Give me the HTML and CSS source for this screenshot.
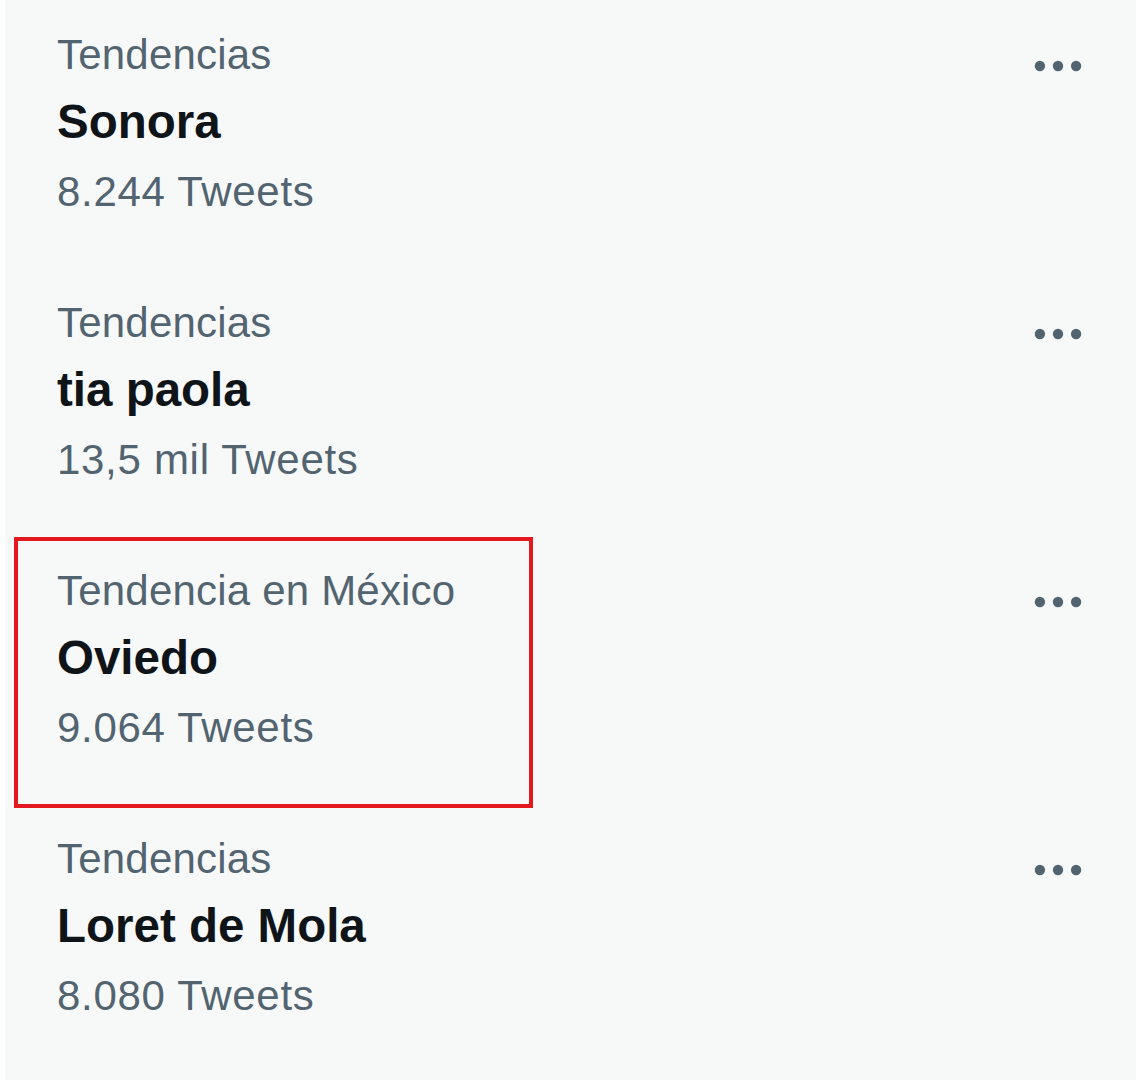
FILE: index.html
```html
<!DOCTYPE html>
<html lang="es">
<head>
<meta charset="utf-8">
<title>Tendencias</title>
<link rel="stylesheet" href="styles.css">
</head>
<body>
<div class="panel">
  <div class="trend">
    <div class="info">
      <div class="category">Tendencias</div>
      <div class="title">Sonora</div>
      <div class="count">8.244 Tweets</div>
    </div>
    <svg class="more" viewBox="0 0 24 24" aria-hidden="true"><circle cx="5" cy="12" r="2"/><circle cx="12" cy="12" r="2"/><circle cx="19" cy="12" r="2"/></svg>
  </div>
  <div class="trend">
    <div class="info">
      <div class="category">Tendencias</div>
      <div class="title">tia paola</div>
      <div class="count">13,5 mil Tweets</div>
    </div>
    <svg class="more" viewBox="0 0 24 24" aria-hidden="true"><circle cx="5" cy="12" r="2"/><circle cx="12" cy="12" r="2"/><circle cx="19" cy="12" r="2"/></svg>
  </div>
  <div class="trend">
    <div class="highlight"></div>
    <div class="info">
      <div class="category">Tendencia en México</div>
      <div class="title">Oviedo</div>
      <div class="count">9.064 Tweets</div>
    </div>
    <svg class="more" viewBox="0 0 24 24" aria-hidden="true"><circle cx="5" cy="12" r="2"/><circle cx="12" cy="12" r="2"/><circle cx="19" cy="12" r="2"/></svg>
  </div>
  <div class="trend">
    <div class="info">
      <div class="category">Tendencias</div>
      <div class="title">Loret de Mola</div>
      <div class="count">8.080 Tweets</div>
    </div>
    <svg class="more" viewBox="0 0 24 24" aria-hidden="true"><circle cx="5" cy="12" r="2"/><circle cx="12" cy="12" r="2"/><circle cx="19" cy="12" r="2"/></svg>
  </div>
</div>
</body>
</html>
```
FILE: styles.css
```css
html, body {
  margin: 0;
  padding: 0;
  background: #ffffff;
}
body {
  padding-left: 5px;
  font-family: "Liberation Sans", Arial, sans-serif;
}
.panel {
  background: #f7f9f9;
  min-height: 1080px;
}
.trend {
  position: relative;
  display: flex;
  align-items: flex-start;
  padding: 30px 47px 51px 52px;
}
.info {
  flex: 1;
  display: flex;
  flex-direction: column;
}
.category {
  font-size: 42px;
  line-height: 50px;
  letter-spacing: 0.2px;
  color: #536471;
}
.title {
  margin-top: 11px;
  font-size: 47.5px;
  line-height: 62px;
  font-weight: 700;
  color: #0f1419;
}
.count {
  margin-top: 14px;
  font-size: 42px;
  line-height: 50px;
  letter-spacing: 0.7px;
  color: #536471;
}
.more {
  width: 62px;
  height: 62px;
  margin-top: 5px;
  fill: #536471;
  flex-shrink: 0;
}
.highlight {
  position: absolute;
  left: 9px;
  top: 1px;
  width: 511px;
  height: 263px;
  border: 4px solid #e3191f;
}
```
